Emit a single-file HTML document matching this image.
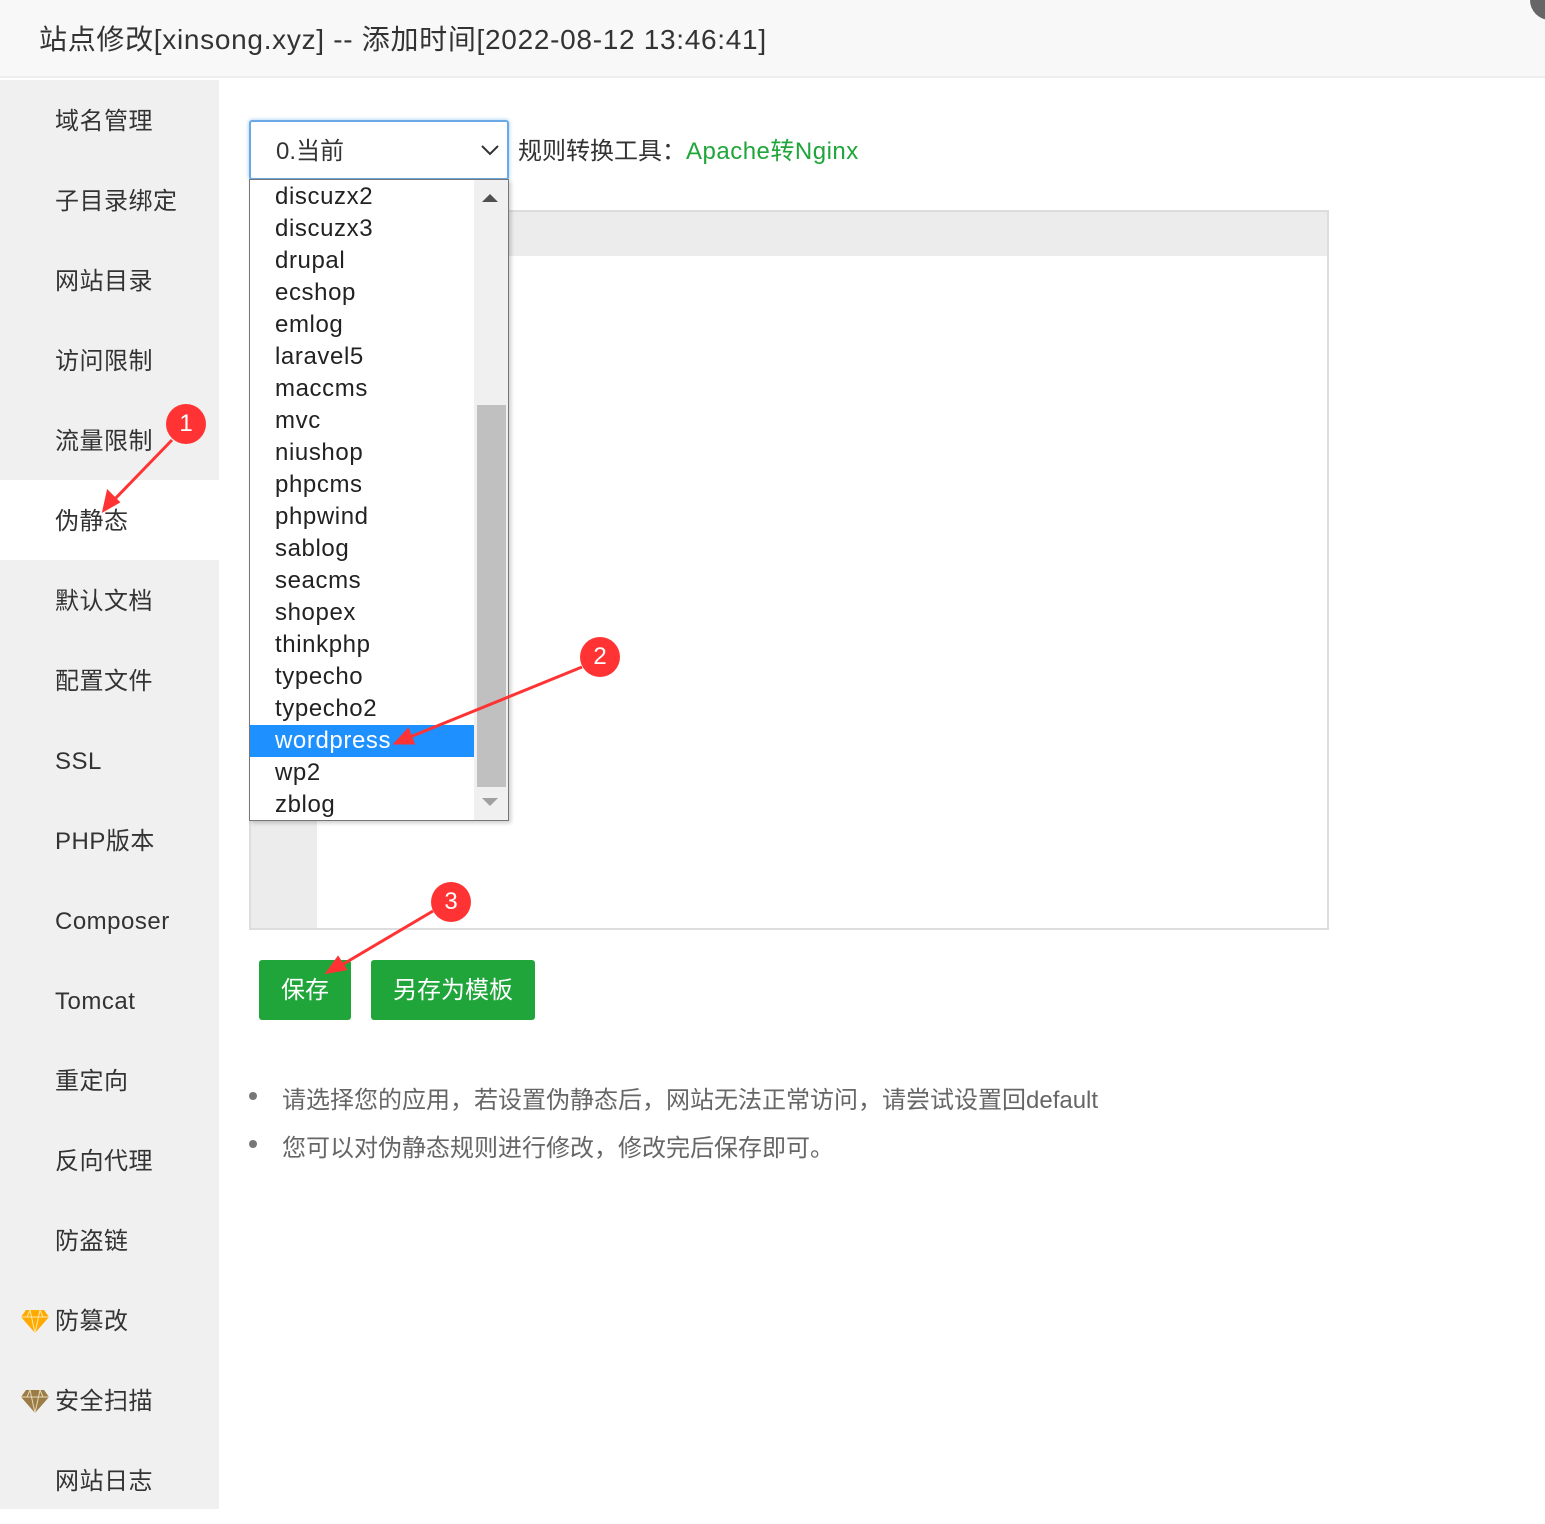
<!DOCTYPE html>
<html><head><meta charset="utf-8"><style>
*{margin:0;padding:0;box-sizing:border-box}
body{width:1545px;height:1509px;position:relative;background:#fff;font-family:"Liberation Sans","Noto Sans CJK SC",sans-serif;overflow:hidden;color:#333}
.a{position:absolute}
#hd{left:0;top:0;width:1545px;height:78px;background:#f8f8f8;border-bottom:2px solid #eee;font-size:28px;line-height:80px;padding-left:39px;color:#333;letter-spacing:0.7px}
#sb{left:0;top:80px;width:219px;height:1429px;background:#f0f0f0}
.mi{position:absolute;left:55px;font-size:24px;line-height:84px;height:80px;color:#333;letter-spacing:0.5px}
#act{left:0;top:480px;width:219px;height:80px;background:#fff}
.it{height:32px;line-height:32px;font-size:24px;padding-left:25px;color:#222;letter-spacing:0.6px}
.bt{background:#20a53a;color:#fff;font-size:24px;text-align:center;line-height:62px;border-radius:3px}
.li{font-size:24px;color:#666;left:282px}
.dot{left:249px;width:8px;height:8px;border-radius:50%;background:#777}
.badge{width:40px;height:40px;border-radius:50%;background:#f33;color:#fff;font-size:24px;text-align:center;line-height:40px}
</style></head><body>
<div class="a" id="hd">站点修改[xinsong.xyz] -- 添加时间[2022-08-12 13:46:41]</div>
<div class="a" style="left:1530px;top:-20px;width:40px;height:40px;border-radius:50%;background:#666"></div>
<div class="a" id="sb"></div>
<div class="a" id="act"></div>
<div class="mi" style="top:80px">域名管理</div>
<div class="mi" style="top:160px">子目录绑定</div>
<div class="mi" style="top:240px">网站目录</div>
<div class="mi" style="top:320px">访问限制</div>
<div class="mi" style="top:400px">流量限制</div>
<div class="mi" style="top:480px">伪静态</div>
<div class="mi" style="top:560px">默认文档</div>
<div class="mi" style="top:640px">配置文件</div>
<div class="mi" style="top:720px">SSL</div>
<div class="mi" style="top:800px">PHP版本</div>
<div class="mi" style="top:880px">Composer</div>
<div class="mi" style="top:960px">Tomcat</div>
<div class="mi" style="top:1040px">重定向</div>
<div class="mi" style="top:1120px">反向代理</div>
<div class="mi" style="top:1200px">防盗链</div>
<div class="mi" style="top:1280px">防篡改</div>
<div class="mi" style="top:1360px">安全扫描</div>
<div class="mi" style="top:1440px">网站日志</div>
<svg class="a" style="left:21px;top:1309px" width="28" height="24" viewBox="0 0 28 24"><path d="M5 1h18l5 7-14 16L0 8z" fill="#fa0"/><path d="M0 8h28M9 1l5 23M19 1l-5 23M9 1l-3 7M19 1l3 7" stroke="#ffe7a8" stroke-width="1" fill="none"/></svg>
<svg class="a" style="left:21px;top:1389px" width="28" height="24" viewBox="0 0 28 24"><path d="M5 1h18l5 7-14 16L0 8z" fill="#9c7c46"/><path d="M0 8h28M9 1l5 23M19 1l-5 23M9 1l-3 7M19 1l3 7" stroke="#e6d7b5" stroke-width="1" fill="none"/></svg>

<div class="a" style="left:249px;top:210px;width:1080px;height:720px;border:2px solid #ddd;background:#fff"></div>
<div class="a" style="left:251px;top:212px;width:1076px;height:44px;background:#ececec"></div>
<div class="a" style="left:251px;top:256px;width:66px;height:672px;background:#ececec"></div>

<div class="a" style="left:249px;top:120px;width:260px;height:60px;border:2px solid #6aa9e6;border-radius:3px;background:#fff;box-shadow:0 0 4px #9cc8f0;font-size:24px;line-height:60px;padding-left:25px">0.当前</div>
<svg class="a" style="left:480px;top:143px" width="20" height="14" viewBox="0 0 20 14"><path d="M2 3l8 8 8-8" stroke="#333" stroke-width="2" fill="none"/></svg>
<div class="a" style="left:518px;top:121px;line-height:62px;font-size:24px;color:#333">规则转换工具：<span style="color:#20a53a;letter-spacing:0.5px">Apache转Nginx</span></div>

<div class="a" style="left:249px;top:179px;width:260px;height:642px;border:1px solid #777;background:#fff;box-shadow:2px 2px 4px rgba(0,0,0,.2);padding-top:1px">
<div class="it">discuzx2</div><div class="it">discuzx3</div><div class="it">drupal</div><div class="it">ecshop</div><div class="it">emlog</div><div class="it">laravel5</div><div class="it">maccms</div><div class="it">mvc</div><div class="it">niushop</div><div class="it">phpcms</div><div class="it">phpwind</div><div class="it">sablog</div><div class="it">seacms</div><div class="it">shopex</div><div class="it">thinkphp</div><div class="it">typecho</div><div class="it">typecho2</div><div class="it" style="background:#1e90ff;color:#fff;width:224px">wordpress</div><div class="it">wp2</div><div class="it">zblog</div>
</div>
<div class="a" style="left:474px;top:180px;width:34px;height:640px;background:#f0f0f0"></div>
<div class="a" style="left:477px;top:405px;width:29px;height:382px;background:#c0c0c0"></div>
<svg class="a" style="left:481px;top:192px" width="18" height="12"><path d="M1 10L9 2l8 8z" fill="#505050"/></svg>
<svg class="a" style="left:481px;top:796px" width="18" height="12"><path d="M1 2h16L9 10z" fill="#a0a0a0"/></svg>

<div class="a bt" style="left:259px;top:960px;width:92px;height:60px">保存</div>
<div class="a bt" style="left:371px;top:960px;width:164px;height:60px">另存为模板</div>

<div class="a dot" style="top:1092px"></div>
<div class="a li" style="top:1080px">请选择您的应用，若设置伪静态后，网站无法正常访问，请尝试设置回default</div>
<div class="a dot" style="top:1140px"></div>
<div class="a li" style="top:1128px">您可以对伪静态规则进行修改，修改完后保存即可。</div>

<svg class="a" style="left:0;top:0" width="1545" height="1509">
<g stroke="#f33" stroke-width="3" fill="#f33">
<line x1="172" y1="440" x2="112" y2="502"/><path d="M104 510l4-18 10 10z"/>
<line x1="582" y1="667" x2="410" y2="737"/><path d="M396 743l12-13 5 13z"/>
<line x1="433" y1="911" x2="340" y2="966"/><path d="M328 972l10-14 7 11z"/>
</g></svg>
<div class="a badge" style="left:166px;top:404px">1</div>
<div class="a badge" style="left:580px;top:637px">2</div>
<div class="a badge" style="left:431px;top:882px">3</div>
</body></html>
